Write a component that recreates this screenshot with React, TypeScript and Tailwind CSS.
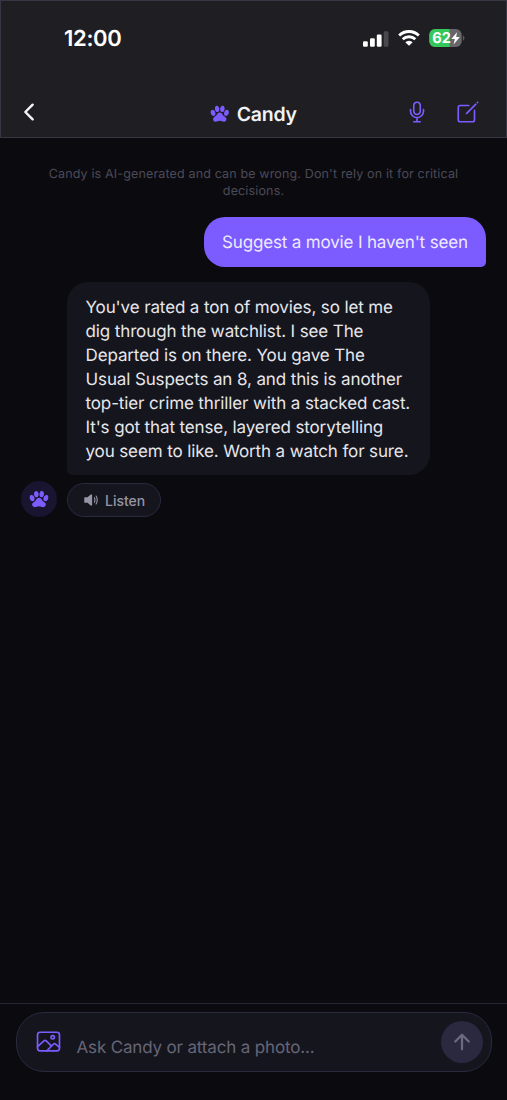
import { IoArrowUp, IoChevronBack, IoCreateOutline, IoImageOutline, IoMicOutline, IoPaw, IoVolumeMedium } from 'react-icons/io5';

const reply = [
  "You've rated a ton of movies, so let me",
  'dig through the watchlist. I see The',
  'Departed is on there. You gave The',
  'Usual Suspects an 8, and this is another',
  'top-tier crime thriller with a stacked cast.',
  "It's got that tense, layered storytelling",
  'you seem to like. Worth a watch for sure.',
];

function StatusBar() {
  return (
    <div className="flex h-[74px] items-center pl-[63px] pr-[41px]">
      <span className="mt-0.5 text-[22px] font-semibold leading-none tracking-[-0.3px] text-white">12:00</span>
      <div className="ml-auto flex items-center">
        <svg width="27" height="17" viewBox="0 0 27 17" fill="#fff">
          <rect x="1" y="11.2" width="4.8" height="5.5" rx="1.3" />
          <rect x="8" y="8.2" width="4.8" height="8.5" rx="1.3" />
          <rect x="14.8" y="4.4" width="4.8" height="12.3" rx="1.3" />
          <rect x="21.7" y="1.2" width="4.8" height="15.5" rx="1.3" fill="#48484d" />
        </svg>
        <svg className="ml-[9px]" width="22" height="16" viewBox="0 0 22 16" fill="none" stroke="#fff" strokeWidth="2.9">
          <path d="M1.2 5.5a14 14 0 0 1 19.6 0" />
          <path d="M4.7 9.3a9 9 0 0 1 12.6 0" />
          <path d="M11 15.8 7.3 12.2a5.3 5.3 0 0 1 7.4 0Z" fill="#fff" stroke="none" />
        </svg>
        <svg className="-mr-px ml-[9px]" width="37" height="18" viewBox="0 0 37 18">
          <defs>
            <clipPath id="battery">
              <rect x="0.3" y="0" width="32.4" height="18" rx="5.8" />
            </clipPath>
          </defs>
          <g clipPath="url(#battery)">
            <rect width="34" height="18" fill="#66666b" />
            <rect width="20.5" height="18" fill="#34c759" />
          </g>
          <path d="M33.8 6.3c2.2.8 2.2 4.6 0 5.4Z" fill="#59595e" />
          <text x="3.2" y="14.4" fontSize="14.8" fontWeight="700" fill="#fff" textLength="18.6" lengthAdjust="spacingAndGlyphs">62</text>
          <path d="M28 3.2 22.3 10h3.6l-1.3 5.4 6.2-7.3h-3.6Z" fill="#fff" />
        </svg>
      </div>
    </div>
  );
}

export default function App() {
  return (
    <div className="flex h-[1100px] w-[507px] flex-col bg-[#0b0b0f] font-['Inter',sans-serif] [text-rendering:geometricPrecision]">
      <header className="h-[138px] border border-[#373643] bg-[#1f1f23]">
        <StatusBar />
        <div className="grid h-[76px] grid-cols-[1fr_auto_1fr] items-center px-[14px] pt-[2px]">
          <button aria-label="Back" className="-mt-1 ml-px w-fit text-[#f5f5f7]">
            <IoChevronBack size={26} />
          </button>
          <div className="flex items-center gap-[7px]">
            <IoPaw size={19.5} className="text-[#7c5cff]" />
            <h1 className="text-[19.5px] font-semibold leading-6 tracking-[-0.25px] text-[#f2f2f5]">Candy</h1>
          </div>
          <div className="-mt-1 flex items-center justify-end gap-[25px] pr-[11px] text-[#7c5cff]">
            <IoMicOutline size={26} />
            <IoCreateOutline size={26} />
          </div>
        </div>
      </header>

      <main className="flex flex-1 flex-col px-[21px] pt-[27.5px]">
        <p className="text-center text-[12.5px] leading-[17px] tracking-[0.15px] text-[#4b4a57]">
          Candy is AI-generated and can be wrong. Don't rely on it for critical
          <br />
          decisions.
        </p>
        <div className="mt-[17.5px] flex h-[50px] w-[282px] items-center self-end rounded-[21px] rounded-br-[5px] bg-[#7c5cff] pl-[18px] text-[17px] tracking-[-0.16px] text-[#eeeaff]">
          <span className="mt-[3px] whitespace-nowrap">Suggest a movie I haven't seen</span>
        </div>
        <div className="ml-[46px] mt-[15px] h-[193px] w-[363px] rounded-[21px] rounded-bl-[5px] bg-[#15151e] pl-[18.5px] pt-[14px] text-[17px] leading-[24px] tracking-[-0.12px] text-[#e6e6ea]">
          {reply.map((line) => (
            <div key={line} className="whitespace-nowrap">{line}</div>
          ))}
        </div>
        <div className="mt-[6px] flex items-center gap-[10px]">
          <div className="flex size-[36px] items-center justify-center rounded-full bg-[#19142f]">
            <IoPaw size={20} className="text-[#7c5cff]" />
          </div>
          <button className="mt-0.5 flex h-[34px] w-[94px] items-center rounded-full border border-[#2a2940] bg-[#15151e] pl-[14px] text-[14px] font-medium text-[#9695a5]">
            <IoVolumeMedium size={18} className="mr-[5px]" />
            Listen
          </button>
        </div>
      </main>

      <footer className="h-[97px] border-t border-[#25243a] px-[15.5px] pt-[8px]">
        <div className="flex h-[59.5px] items-center rounded-[28px] border border-[#2a2940] bg-[#15151e] pl-[18px] pr-[8px]">
          <IoImageOutline size={27} className="text-[#7c5cff]" />
          <span className="ml-[15px] mt-[13px] text-[17px] tracking-[-0.16px] text-[#666576]">Ask Candy or attach a photo...</span>
          <button aria-label="Send" className="ml-auto flex size-[42px] items-center justify-center rounded-full bg-[#2a2940] text-[#6d6b80]">
            <IoArrowUp size={24} />
          </button>
        </div>
      </footer>
    </div>
  );
}
